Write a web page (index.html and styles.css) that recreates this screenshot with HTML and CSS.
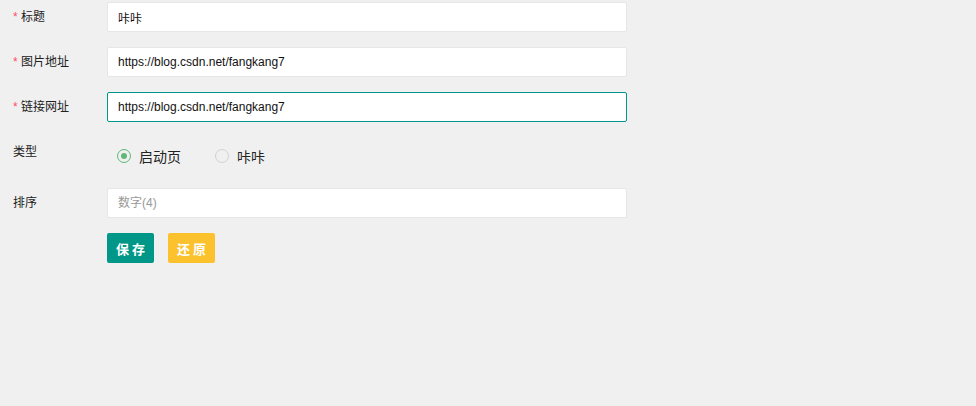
FILE: index.html
```html
<!DOCTYPE html>
<html lang="zh">
<head>
<meta charset="utf-8">
<link rel="stylesheet" href="styles.css">
</head>
<body>
<form class="form">
  <div class="row">
    <label class="label"><span class="req">*</span> 标题</label>
    <input class="input" type="text" value="咔咔">
  </div>
  <div class="row">
    <label class="label"><span class="req">*</span> 图片地址</label>
    <input class="input" type="text" value="https://blog.csdn.net/fangkang7">
  </div>
  <div class="row">
    <label class="label"><span class="req">*</span> 链接网址</label>
    <input class="input focus" type="text" value="https://blog.csdn.net/fangkang7">
  </div>
  <div class="row row-radio">
    <label class="label">类型</label>
    <div class="radios">
      <span class="radio on"><i class="dot"></i>启动页</span>
      <span class="radio"><i class="dot"></i>咔咔</span>
    </div>
  </div>
  <div class="row">
    <label class="label">排序</label>
    <input class="input" type="text" placeholder="数字(4)">
  </div>
  <div class="row btns">
    <button type="button" class="btn save">保存</button>
    <button type="button" class="btn reset">还原</button>
  </div>
</form>
</body>
</html>
```
FILE: styles.css
```css
html, body {
  margin: 0;
  padding: 0;
  background: #f0f0f0;
  font-family: "Liberation Sans", "Noto Sans CJK SC", sans-serif;
  font-size: 12px;
  color: #333;
}
.form {
  padding-top: 2px;
}
.row {
  display: flex;
  align-items: center;
  margin-bottom: 15px;
}
.label {
  width: 94px;
  padding-left: 13px;
  line-height: 30px;
  color: #222;
  flex: none;
}
.req {
  color: #ff4d6a;
}
.input {
  box-sizing: border-box;
  width: 520px;
  height: 30px;
  border: 1px solid #e6e6e6;
  border-radius: 2px;
  background: #fff;
  padding: 0 10px;
  font-family: "Liberation Sans", "Noto Sans CJK SC", sans-serif;
  font-size: 12px;
  color: #111;
  outline: none;
  margin: 0;
}
.input::placeholder {
  color: #999;
}
.input.focus {
  border-color: #009688;
}
.row-radio {
  align-items: flex-start;
  height: 36px;
}
.radios {
  display: flex;
  margin-top: 5px;
  padding-left: 10px;
}
.radio {
  display: flex;
  align-items: center;
  height: 28px;
  font-size: 14px;
  color: #222;
  margin-right: 34px;
}
.dot {
  box-sizing: border-box;
  width: 14px;
  height: 14px;
  border: 1px solid #d2d2d2;
  border-radius: 50%;
  margin-right: 8px;
  display: flex;
  align-items: center;
  justify-content: center;
}
.radio.on .dot {
  border-color: #5fb878;
}
.radio.on .dot::after {
  content: "";
  width: 6px;
  height: 6px;
  border-radius: 50%;
  background: #5fb878;
}
.btns {
  padding-left: 107px;
  gap: 14px;
}
.btn {
  width: 47px;
  height: 30px;
  border: none;
  border-radius: 2px;
  color: #fff;
  font-family: "Noto Sans CJK SC", sans-serif;
  font-size: 13px;
  font-weight: bold;
  letter-spacing: 3px;
  padding: 0 0 0 3px;
  margin: 0;
}
.save {
  background: #009688;
}
.reset {
  background: #fbc22e;
}
```
